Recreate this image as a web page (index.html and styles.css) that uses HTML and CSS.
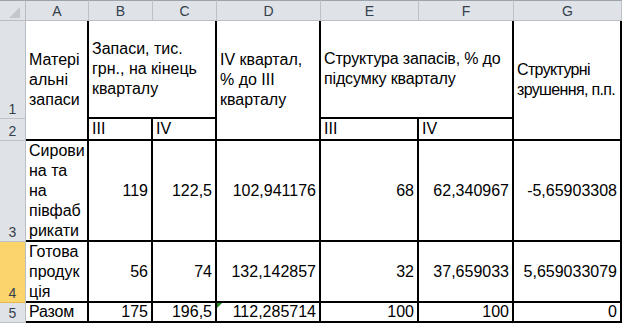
FILE: index.html
```html
<!DOCTYPE html>
<html lang="uk">
<head>
<meta charset="utf-8">
<title>Матеріальні запаси</title>
<link rel="stylesheet" href="styles.css">
</head>
<body>
<div class="sheet">
  <div class="corner">
    <svg width="25" height="20" viewBox="0 0 25 20"><polygon points="20,7 20,18 9,18" fill="#c3c7cc"/></svg>
  </div>
  <div class="ch">A</div>
  <div class="ch">B</div>
  <div class="ch">C</div>
  <div class="ch">D</div>
  <div class="ch">E</div>
  <div class="ch">F</div>
  <div class="ch ch-last">G</div>

  <div class="rh">1</div>
  <div class="c span-r2 mid">Матері<br>альні<br>запаси</div>
  <div class="c span-c2 mid">Запаси, тис.<br>грн., на кінець<br>кварталу</div>
  <div class="c span-r2 mid">IV квартал,<br>% до III<br>кварталу</div>
  <div class="c span-c2 mid tight-s">Структура запасів, % до<br>підсумку кварталу</div>
  <div class="c span-r2 mid tight">Структурні<br>зрушення, п.п.</div>

  <div class="rh">2</div>
  <div class="c bot">III</div>
  <div class="c bot">IV</div>
  <div class="c bot">III</div>
  <div class="c bot">IV</div>

  <div class="rh">3</div>
  <div class="c mid">Сирови<br>на та<br>на<br>півфаб<br>рикати</div>
  <div class="c mid num">119</div>
  <div class="c mid num">122,5</div>
  <div class="c mid num">102,941176</div>
  <div class="c mid num">68</div>
  <div class="c mid num">62,340967</div>
  <div class="c mid num">-5,65903308</div>

  <div class="rh rh-sel">4</div>
  <div class="c mid">Готова<br>продук<br>ція</div>
  <div class="c mid num">56</div>
  <div class="c mid num">74</div>
  <div class="c mid num">132,142857</div>
  <div class="c mid num">32</div>
  <div class="c mid num">37,659033</div>
  <div class="c mid num">5,659033079</div>

  <div class="rh">5</div>
  <div class="c mid tight-s">Разом</div>
  <div class="c mid num">175</div>
  <div class="c mid num">196,5</div>
  <div class="c mid num">112,285714<span class="err"></span></div>
  <div class="c mid num">100</div>
  <div class="c mid num">100</div>
  <div class="c mid num">0</div>
</div>
</body>
</html>
```

FILE: styles.css
```css
* { box-sizing: border-box; }

html, body {
  margin: 0;
  padding: 0;
  background: #ffffff;
}

.sheet {
  display: grid;
  grid-template-columns: 26px 63px 64px 64px 104px 98px 95px 108px;
  grid-template-rows: 21px 98px 22px 101px 61px 20px;
  width: 622px;
  font-family: "Liberation Sans", Arial, sans-serif;
  font-size: 16px;
  color: #000;
}

.corner {
  background: #dfe2e7;
  border-top: 1px solid #9da3aa;
  border-right: 1px solid #b9bec5;
  border-bottom: 1px solid #b9bec5;
}
.corner svg { display: block; margin-top: -1px; }

.ch {
  background: #dfe2e7;
  border-top: 1px solid #9da3aa;
  border-right: 1px solid #bdc2c8;
  border-bottom: 1px solid #b9bec5;
  font-size: 14px;
  color: #34404c;
  display: flex;
  align-items: center;
  justify-content: center;
}

.rh {
  background: #dfe2e7;
  border-right: 1px solid #b9bec5;
  border-bottom: 1px solid #bdc2c8;
  font-size: 14px;
  color: #34404c;
  display: flex;
  align-items: flex-end;
  justify-content: center;
  padding-bottom: 1px;
}
.rh-sel {
  background: #fbd46b;
  border-bottom-color: #e6b84e;
}

.c {
  border-right: 2px solid #000;
  border-bottom: 2px solid #000;
  padding: 0 3px;
  line-height: 20px;
  display: flex;
  white-space: nowrap;
  position: relative;
}
.mid { align-items: center; }
.bot { align-items: flex-end; }
.num { justify-content: flex-end; }

.tight { letter-spacing: -0.65px; }
.tight-s { letter-spacing: -0.15px; }

.span-r2 { grid-row: span 2; }
.span-c2 { grid-column: span 2; }

.err {
  position: absolute;
  left: 0;
  top: 0;
  width: 0;
  height: 0;
  border-top: 5px solid #1f8a1f;
  border-right: 5px solid transparent;
}
```
